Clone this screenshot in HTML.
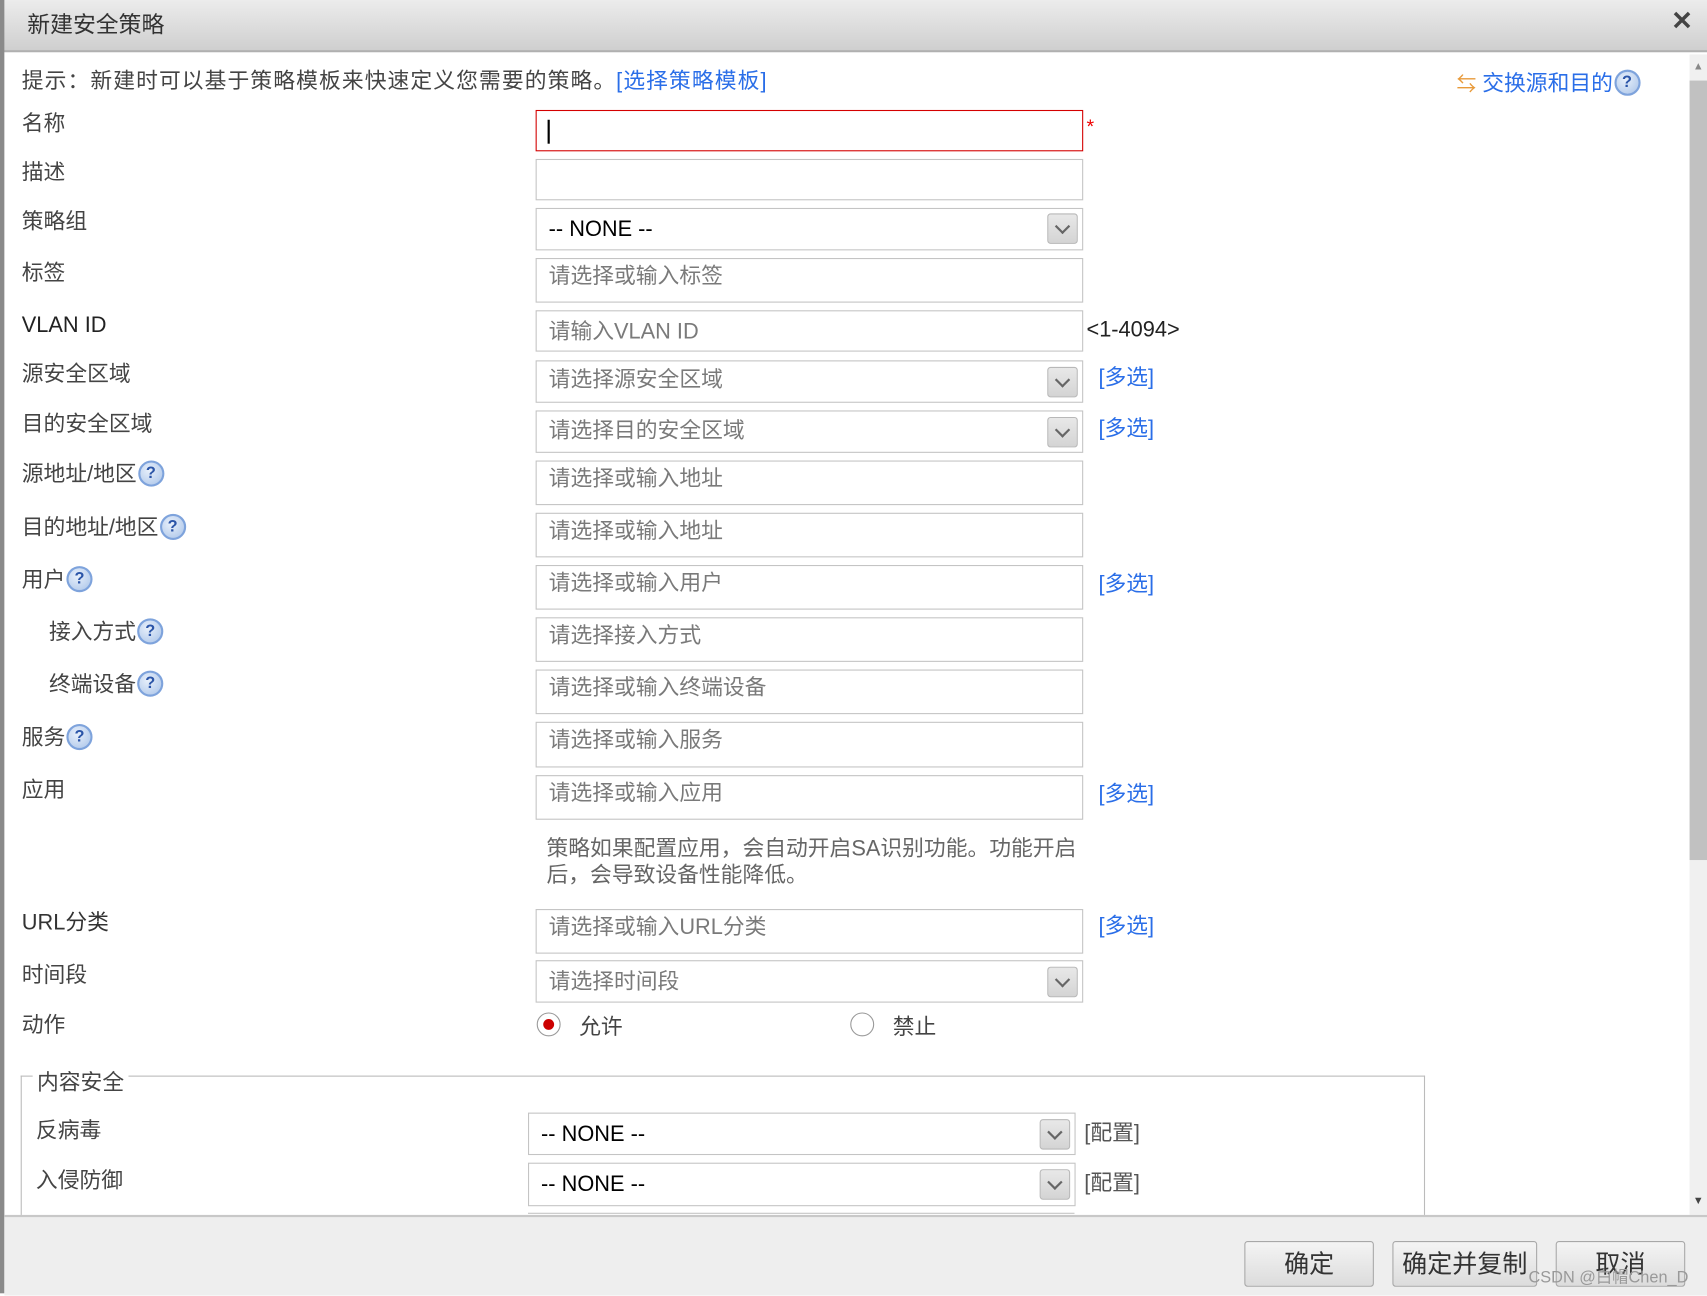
<!DOCTYPE html>
<html><head><meta charset="utf-8"><style>
html,body{margin:0;padding:0;width:1707px;height:1293px;overflow:hidden;background:#fff}
#w{position:absolute;left:0;top:0;width:1568px;height:1188px;transform:scale(1.08865);transform-origin:0 0;font-family:"Liberation Sans","Noto Sans CJK SC",sans-serif;color:#444;font-size:20px}
.a{position:absolute;white-space:nowrap}
.lb{position:absolute;left:20px;font-size:20px;color:#444;line-height:24px}
.in{position:absolute;left:492px;width:503px;border:1px solid #c4c4c4;background:#fff;box-sizing:border-box}
.ph{position:absolute;left:11px;color:#7a7a7a;font-size:20px;line-height:24px}
.dd{position:absolute;right:4px;width:28px;height:28px;border:1px solid #b8b8b8;border-radius:3px;background:linear-gradient(#e8e8e8,#d4d4d4);box-sizing:border-box}
.dd:after{content:"";position:absolute;left:8px;top:6px;width:8px;height:8px;border-right:2px solid #666;border-bottom:2px solid #666;transform:rotate(45deg)}
.lk{position:absolute;left:1009px;color:#2a6ee8;font-size:20px}
.q{display:inline-block;width:20px;height:20px;border-radius:50%;background:radial-gradient(circle at 40% 35%,#e8f0fb,#a9c3e8);border:2px solid #7ea3dc;color:#2b55a8;font-size:15px;font-weight:bold;text-align:center;line-height:20px;vertical-align:middle;box-sizing:content-box;margin-left:1px;position:relative;top:-2px}
.btn{position:absolute;top:1140px;height:42px;border:1px solid #a8a8a8;border-radius:3px;background:linear-gradient(#f4f4f4,#dcdcdc);box-sizing:border-box;text-align:center;line-height:40px;font-size:23px;color:#333}
</style></head><body><div id="w">
<div class="a" style="left:0;top:0;width:1568px;height:46px;background:linear-gradient(#ececec,#cfcfcf);border-bottom:2px solid #b0b0b0"></div>
<div class="a" style="left:0;top:0;width:4px;height:1188px;background:#8a8a8a"></div>
<div class="a" style="left:25px;top:7px;font-size:21px;color:#333">新建安全策略</div>
<div class="a" style="left:1535px;top:5px;font-size:24px;color:#444;font-weight:bold">✕</div>
<div class="a" style="left:1552px;top:50px;width:16px;height:1066px;background:#f0f0f0"></div>
<div class="a" style="left:1552px;top:74px;width:16px;height:716px;background:#c1c1c1"></div>
<div class="a" style="left:1555px;top:56px;font-size:10px;color:#888">▲</div>
<div class="a" style="left:1555px;top:1098px;font-size:10px;color:#444">▼</div>
<div class="a" style="left:20px;top:58px;color:#444;letter-spacing:1px">提示：新建时可以基于策略模板来快速定义您需要的策略。<span style="color:#2a6ee8">[选择策略模板]</span></div>
<div class="a" style="left:1338px;top:60px;color:#2a6ee8"><span style="color:#e89a3a;font-size:18px">⇆</span> 交换源和目的<span class="q">?</span></div>

<div class="lb" style="top:102px">名称</div>
<div class="in" style="top:101px;height:38px;border-color:#d40000"><div class="a" style="left:10px;top:8px;width:2px;height:22px;background:#000"></div></div>
<div class="a" style="left:998px;top:106px;color:#e00;font-size:18px">*</div>

<div class="lb" style="top:147px">描述</div>
<div class="in" style="top:146px;height:38px"></div>

<div class="lb" style="top:192px">策略组</div>
<div class="in" style="top:191px;height:39px"><div class="ph" style="color:#000;top:7px">-- NONE --</div><div class="dd" style="top:4px"></div></div>

<div class="lb" style="top:239px">标签</div>
<div class="in" style="top:237px;height:41px"><div class="ph" style="top:4px">请选择或输入标签</div></div>

<div class="lb" style="top:287px;color:#222">VLAN ID</div>
<div class="in" style="top:285px;height:38px"><div class="ph" style="top:7px">请输入VLAN ID</div></div>
<div class="a" style="left:998px;top:292px;color:#222">&lt;1-4094&gt;</div>

<div class="lb" style="top:332px">源安全区域</div>
<div class="in" style="top:331px;height:39px"><div class="ph" style="top:5px">请选择源安全区域</div><div class="dd" style="top:5px"></div></div>
<div class="lk" style="top:330px">[多选]</div>

<div class="lb" style="top:378px">目的安全区域</div>
<div class="in" style="top:377px;height:39px"><div class="ph" style="top:6px">请选择目的安全区域</div><div class="dd" style="top:5px"></div></div>
<div class="lk" style="top:377px">[多选]</div>

<div class="lb" style="top:424px">源地址/地区<span class="q">?</span></div>
<div class="in" style="top:423px;height:41px"><div class="ph" style="top:4px">请选择或输入地址</div></div>

<div class="lb" style="top:473px">目的地址/地区<span class="q">?</span></div>
<div class="in" style="top:471px;height:41px"><div class="ph" style="top:4px">请选择或输入地址</div></div>

<div class="lb" style="top:521px">用户<span class="q">?</span></div>
<div class="in" style="top:519px;height:41px"><div class="ph" style="top:4px">请选择或输入用户</div></div>
<div class="lk" style="top:520px">[多选]</div>

<div class="lb" style="top:569px;left:45px">接入方式<span class="q">?</span></div>
<div class="in" style="top:567px;height:41px"><div class="ph" style="top:4px">请选择接入方式</div></div>

<div class="lb" style="top:617px;left:45px">终端设备<span class="q">?</span></div>
<div class="in" style="top:615px;height:41px"><div class="ph" style="top:4px">请选择或输入终端设备</div></div>

<div class="lb" style="top:666px">服务<span class="q">?</span></div>
<div class="in" style="top:663px;height:42px"><div class="ph" style="top:4px">请选择或输入服务</div></div>

<div class="lb" style="top:714px">应用</div>
<div class="in" style="top:712px;height:41px"><div class="ph" style="top:4px">请选择或输入应用</div></div>
<div class="lk" style="top:713px">[多选]</div>

<div class="a" style="left:502px;top:768px;color:#666;line-height:24px;font-size:20px">策略如果配置应用，会自动开启SA识别功能。功能开启<br>后，会导致设备性能降低。</div>

<div class="lb" style="top:836px;color:#333">URL分类</div>
<div class="in" style="top:835px;height:41px"><div class="ph" style="top:4px">请选择或输入URL分类</div></div>
<div class="lk" style="top:834px">[多选]</div>

<div class="lb" style="top:884px">时间段</div>
<div class="in" style="top:882px;height:39px"><div class="ph" style="top:7px">请选择时间段</div><div class="dd" style="top:5px"></div></div>

<div class="lb" style="top:930px">动作</div>
<div class="a" style="left:493px;top:930px;width:20px;height:20px;border:1px solid #999;border-radius:50%;background:#fff"><div class="a" style="left:5px;top:5px;width:10px;height:10px;border-radius:50%;background:#c00"></div></div>
<div class="a" style="left:532px;top:927px;color:#444">允许</div>
<div class="a" style="left:781px;top:930px;width:20px;height:20px;border:1px solid #999;border-radius:50%;background:#fff"></div>
<div class="a" style="left:820px;top:927px;color:#444">禁止</div>

<div class="a" style="left:19px;top:988px;width:1290px;height:140px;border:1px solid #bbb;border-bottom:none;box-sizing:border-box"></div>
<div class="a" style="left:30px;top:978px;background:#fff;padding:0 4px;color:#444">内容安全</div>
<div class="a" style="left:33px;top:1022px">反病毒</div>
<div class="in" style="left:485px;top:1022px;height:39px"><div class="ph" style="color:#000;top:7px">-- NONE --</div><div class="dd" style="top:5px"></div></div>
<div class="a" style="left:996px;top:1024px;color:#555">[配置]</div>
<div class="a" style="left:33px;top:1068px">入侵防御</div>
<div class="in" style="left:485px;top:1068px;height:40px"><div class="ph" style="color:#000;top:7px">-- NONE --</div><div class="dd" style="top:5px"></div></div>
<div class="a" style="left:996px;top:1070px;color:#555">[配置]</div>
<div class="a" style="left:485px;top:1114px;width:502px;height:1px;background:#c4c4c4"></div>

<div class="a" style="left:4px;top:1116px;width:1564px;height:72px;background:#eeeeee;border-top:2px solid #c8c8c8"></div>
<div class="btn" style="left:1143px;width:119px">确定</div>
<div class="btn" style="left:1279px;width:133px">确定并复制</div>
<div class="btn" style="left:1429px;width:119px">取消</div>
<div class="a" style="left:1404px;top:1162px;font-size:15px;color:#999">CSDN @白帽Chen_D</div>
</div></body></html>
